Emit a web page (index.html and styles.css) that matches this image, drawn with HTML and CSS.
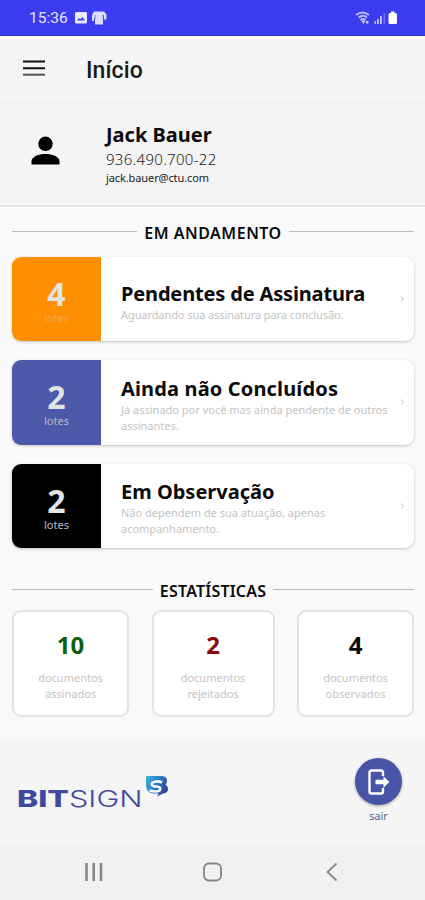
FILE: index.html
```html
<!DOCTYPE html>
<html lang="pt-BR">
<head>
  <meta charset="UTF-8">
  <meta name="viewport" content="width=device-width, initial-scale=1.0">
  <title>BitSign - Início</title>
  <link rel="stylesheet" href="styles.css">
</head>
<body>
  <div class="status-bar">
    <span class="clock">15:36</span>
    <svg class="status-left" width="32" height="16" viewBox="0 0 32 16">
      <path fill="#e9e9ff" fill-rule="evenodd" d="M1.500 2h9a1.500 1.500 0 0 1 1.500 1.500v8.500a1.500 1.500 0 0 1-1.500 1.500h-9A1.500 1.500 0 0 1 0 12V3.500A1.500 1.500 0 0 1 1.500 2zM2 10.500h8L7.300 7 5.300 9.300 4 8z"/>
      <path fill="#dcdcff" d="M19 1.500h10l2.500 3v5H29V5h-1v9.500h-8V8h-1v3h-2V5z"/>
      <path d="M20 5v4M28 5v4" stroke="#7c7cf5" stroke-width="1"/>
    </svg>
    <svg class="status-right" width="44" height="16" viewBox="0 0 44 16">
      <g fill="none" stroke="#b9b9fb" stroke-width="2">
        <path d="M1 5q6.500-5 13 0M3.500 7.500q4.500-3.500 8.500 0"/>
        <path d="M5.500 10q2.500-2 5 0"/>
      </g>
      <path fill="#c8c8fc" d="M6 10.500h4.500l-2 3.500zM11 11h2.500v2.500H11zM19.500 11H21v3h-1.500zM22 9h1.800v5H22zM25 6h1.800v8H25z"/>
      <path fill="#7171f4" d="M28.500 3H30v11h-1.500z"/>
      <path fill="#fff" d="M36 1.500h3.500V3h1A1.500 1.500 0 0 1 42 4.500v8a1.500 1.500 0 0 1-1.500 1.500H35a1.500 1.500 0 0 1-1.500-1.500v-8A1.500 1.500 0 0 1 35 3h1z"/>
    </svg>
  </div>

  <header class="app-bar">
    <svg class="menu-icon" width="24" height="18" viewBox="0 0 24 18">
      <path d="M1 2.500h22M1 9.200h22" stroke="#111" stroke-width="2"/>
      <path d="M1 15.700h22" stroke="#555" stroke-width="2"/>
    </svg>
    <h1 class="page-title">Início</h1>
  </header>

  <section class="profile">
    <svg class="avatar" width="30" height="30" viewBox="0 0 30 30">
      <circle cx="15.500" cy="7.800" r="7.200"/>
      <path d="M1.500 28.500v-3.200c0-4.800 7.500-7.300 14-7.300s14 2.500 14 7.300v3.200z"/>
    </svg>
    <div class="profile-info">
      <div class="profile-name">Jack Bauer</div>
      <div class="profile-cpf">936.490.700-22</div>
      <div class="profile-email">jack.bauer@ctu.com</div>
    </div>
  </section>

  <main class="content">
    <h2 class="divider batches-title">EM ANDAMENTO</h2>

    <div class="batches">
      <div class="batch">
        <div class="batch-count orange"><strong>4</strong><span>lotes</span></div>
        <div class="batch-body tight">
          <h3>Pendentes de Assinatura</h3>
          <p>Aguardando sua assinatura para conclusão.</p>
        </div>
        <svg class="chevron" width="5" height="8" viewBox="0 0 5 8"><path d="M1 1.500l2.500 2.500L1 6.500"/></svg>
      </div>
      <div class="batch">
        <div class="batch-count blue"><strong>2</strong><span>lotes</span></div>
        <div class="batch-body loose">
          <h3>Ainda não Concluídos</h3>
          <p>Já assinado por você mas ainda pendente de outros<br>assinantes.</p>
        </div>
        <svg class="chevron" width="5" height="8" viewBox="0 0 5 8"><path d="M1 1.500l2.500 2.500L1 6.500"/></svg>
      </div>
      <div class="batch">
        <div class="batch-count black"><strong>2</strong><span>lotes</span></div>
        <div class="batch-body">
          <h3>Em Observação</h3>
          <p>Não dependem de sua atuação, apenas<br>acompanhamento.</p>
        </div>
        <svg class="chevron" width="5" height="8" viewBox="0 0 5 8"><path d="M1 1.500l2.500 2.500L1 6.500"/></svg>
      </div>
    </div>

    <h2 class="divider stats-title">ESTATÍSTICAS</h2>

    <div class="stats">
      <div class="stat">
        <strong class="green">10</strong>
        <span>documentos<br>assinados</span>
      </div>
      <div class="stat">
        <strong class="red">2</strong>
        <span>documentos<br>rejeitados</span>
      </div>
      <div class="stat">
        <strong>4</strong>
        <span>documentos<br>observados</span>
      </div>
    </div>
  </main>

  <footer class="footer">
    <svg class="logo" width="154" height="40" viewBox="0 0 154 40">
      <defs>
        <linearGradient id="mark" x1="0" y1="0" x2="1" y2="0.500">
          <stop offset="0" stop-color="#41b4dc"/>
          <stop offset="0.500" stop-color="#2b83c4"/>
          <stop offset="1" stop-color="#34409c"/>
        </linearGradient>
      </defs>
      <text class="logo-bit" x="0" y="33.500" textLength="52" lengthAdjust="spacingAndGlyphs">BIT</text>
      <text class="logo-sign" x="52" y="33.500" textLength="73.500" lengthAdjust="spacingAndGlyphs">SIGN</text>
      <path fill="url(#mark)" d="M129 3h15q6 0 6 4.500 0 2.500-1.500 4 2.500 1.500 2.500 4.500 0 4-5 4.500l-6 3 1.500-3h-5q-7.500-1-7.500-8z"/>
      <path fill="none" stroke="#f4f8fc" stroke-width="2.600" d="M145 9.500q-3-1.500-6-1-5.500 1-4 3.500 1 1.500 4.500 1.500 5 .5 3.500 3.500-1.500 2.500-10.500.5"/>
    </svg>
    <div class="logout">
      <div class="logout-button">
        <svg width="24" height="28" viewBox="0 0 24 28">
          <path d="M16 8V4.500Q16 2.500 14 2.500H4.500Q2.500 2.500 2.500 4.500v19q0 2 2 2H14q2 0 2-2V20" fill="none" stroke="#fff" stroke-width="2.400"/>
          <path d="M8.500 11.800h8V8.300L22.500 14l-6 5.700v-3.500h-8z" fill="#fff"/>
        </svg>
      </div>
      <span>sair</span>
    </div>
  </footer>

  <nav class="nav-bar">
    <svg width="20" height="20" viewBox="0 0 20 20"><path d="M2.500 1v18M9.700 1v18M17 1v18" stroke-width="2.600"/></svg>
    <svg width="20" height="20" viewBox="0 0 20 20"><rect x="1" y="1.500" width="17" height="17" rx="5" stroke-width="1.800"/></svg>
    <svg width="20" height="20" viewBox="0 0 20 20"><path d="M14.500 1.500L5.500 10l9 8.500" stroke-width="1.800"/></svg>
  </nav>
</body>
</html>
```
FILE: styles.css
```css
* {
  box-sizing: border-box;
}
body {
  margin: 0;
  width: 425px;
  height: 900px;
  overflow: hidden;
  display: flex;
  flex-direction: column;
  background-color: #f9f9f9;
  color: #0a0a0a;
  font-family: 'Noto Sans', sans-serif;
}
h1, h2, h3, p {
  margin: 0;
}
.status-bar {
  height: 36px;
  flex: none;
  display: flex;
  align-items: center;
  padding: 0 26px 0 29px;
  background-color: #3b3bf0;
  border-bottom: 1px solid #3434bd;
  color: #e6e6ff;
}
.clock {
  width: 46px;
  font: 400 15.500px/16px Roboto, sans-serif;
}
.status-right {
  margin-left: auto;
}
.app-bar {
  height: 66px;
  flex: none;
  display: flex;
  align-items: center;
  padding: 2px 22px 0;
  background-color: #f5f5f5;
  border-top: 2px solid #fff;
  border-bottom: 1px solid #efefef;
}
.menu-icon {
  margin-top: -5px;
}
.page-title {
  margin-left: 40px;
  font: 500 23px/28px Roboto, sans-serif;
  letter-spacing: 0.1px;
  color: #1a1a1a;
}
.profile {
  height: 105px;
  flex: none;
  display: flex;
  padding: 19px 0 0 30px;
  background-color: #f4f4f4;
  border-bottom: 2px solid #e6e6e6;
}
.avatar {
  margin-top: 15px;
}
.profile-info {
  margin-left: 46px;
  white-space: nowrap;
}
.profile-name {
  font-size: 20px;
  line-height: 28px;
  font-weight: 700;
}
.profile-cpf {
  font-size: 15px;
  line-height: 21px;
  font-weight: 300;
  letter-spacing: 0.3px;
  color: #222;
}
.profile-email {
  font-size: 11px;
  line-height: 16px;
  letter-spacing: -0.1px;
  color: #222;
}
.content {
  height: 533px;
  flex: none;
  padding: 17px 11px 0 12px;
}
.divider {
  display: flex;
  align-items: center;
  gap: 7px;
  height: 19px;
  font-size: 16px;
  line-height: 19px;
  font-weight: 600;
  white-space: nowrap;
}
.batches-title {
  letter-spacing: 0.5px;
}
.divider::before,
.divider::after {
  content: '';
  flex: 1;
  height: 1px;
  margin-top: -4px;
  background-color: #bababa;
}
.batches {
  display: flex;
  flex-direction: column;
  gap: 19px;
  margin-top: 13.500px;
}
.batch {
  display: flex;
  align-items: center;
  height: 84.500px;
  padding-right: 9px;
  background-color: #fff;
  border-radius: 9px;
  overflow: hidden;
  box-shadow: 0 1px 3px rgba(0, 0, 0, 0.22);
}
.batch-count {
  width: 89px;
  height: 100%;
  padding-top: 20px;
  display: flex;
  flex-direction: column;
  align-items: center;
  color: #e4e4e4;
}
.batch-count strong {
  font-size: 32px;
  line-height: 34px;
}
.batch-count span {
  font-size: 11px;
  line-height: 14px;
  color: #b8b8c4;
}
.batch-count.orange {
  background-color: #ff8f00;
}
.batch-count.orange span {
  color: #f3a94d;
}
.batch-count.blue {
  background-color: #4c58a8;
}
.batch-count.black {
  background-color: #000;
}
.batch-body {
  flex: 1;
  padding: 5px 0 0 20px;
  white-space: nowrap;
}
.batch-body h3 {
  font-size: 20px;
  line-height: 26px;
  font-weight: 700;
}
.batch-body p {
  font-size: 11px;
  line-height: 16px;
  color: #c4c4c4;
}
.tight {
  padding-top: 7px;
}
.tight h3 {
  letter-spacing: -0.16px;
}
.tight p {
  letter-spacing: -0.08px;
}
.loose h3 {
  letter-spacing: 0.15px;
}
.chevron {
  fill: none;
  stroke: #bbb;
}
.stats-title {
  margin-top: 33.500px;
  letter-spacing: 0.2px;
}
.stats {
  display: grid;
  grid-template-columns: 117px 123px 117px;
  justify-content: space-between;
  margin-top: 9.500px;
}
.stat {
  height: 107px;
  padding-top: 18px;
  display: flex;
  flex-direction: column;
  align-items: center;
  background-color: #fff;
  border: 2px solid #e3e3e3;
  border-radius: 9px;
  text-align: center;
}
.stat strong {
  font-size: 24px;
  line-height: 30px;
}
.stat span {
  margin-top: 10px;
  font-size: 11px;
  line-height: 16px;
  color: #c4c4c4;
}
.stat .green {
  color: #0b600b;
}
.stat .red {
  color: #8b0a0a;
}
.footer {
  height: 104px;
  flex: none;
  display: flex;
  justify-content: space-between;
  padding: 18px 22px 0 17px;
  background-color: #f5f5f5;
}
.logo {
  margin-top: 15px;
}
.logo-bit,
.logo-sign {
  font-family: Inter, sans-serif;
  font-size: 23px;
  fill: #3f4a9e;
}
.logo-bit {
  font-weight: 800;
}
.logo-sign {
  font-weight: 300;
}
.logout {
  width: 49px;
  display: flex;
  flex-direction: column;
  align-items: center;
  font-size: 11px;
  line-height: 16px;
  color: #59639f;
}
.logout-button {
  width: 47px;
  height: 47px;
  margin-bottom: 3px;
  display: flex;
  align-items: center;
  justify-content: center;
  border-radius: 50%;
  background-color: #4854a6;
  box-shadow: 0 1px 3px rgba(0, 0, 0, 0.35);
}
.nav-bar {
  height: 56px;
  flex: none;
  display: flex;
  justify-content: space-between;
  padding: 18px 83px 0 84px;
  background-color: #f1f1f1;
}
.nav-bar svg {
  fill: none;
  stroke: #858585;
}
```
